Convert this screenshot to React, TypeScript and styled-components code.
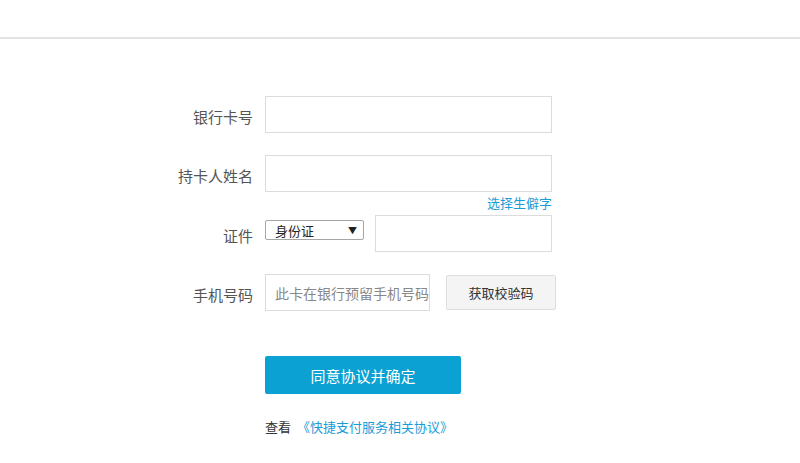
import React from 'react';
import styled, { createGlobalStyle } from 'styled-components';

const GlobalStyle = createGlobalStyle`
  html, body {
    margin: 0;
    padding: 0;
    background: #fff;
    font-family: "Noto Sans CJK SC", "Liberation Sans", sans-serif;
  }
`;

const App = () => {
  return (
    <>
      <GlobalStyle />
      <Page>
        <TopBar />
        <Form>
          <Row>
            <Label>银行卡号</Label>
            <TextInput $width={287} />
          </Row>
          <Row>
            <Label>持卡人姓名</Label>
            <TextInput $width={287} />
          </Row>
          <HintRow>
            <HintLink href='#'>选择生僻字</HintLink>
          </HintRow>
          <Row>
            <Label>证件</Label>
            <IdGroup>
              <Select>
                <span>身份证</span>
                <Arrow>▼</Arrow>
              </Select>
              <TextInput $width={177} />
            </IdGroup>
          </Row>
          <PhoneRow>
            <Label>手机号码</Label>
            <Controls>
              <TextInput $width={165} placeholder='此卡在银行预留手机号码' />
              <CodeButton type='button'>获取校验码</CodeButton>
            </Controls>
          </PhoneRow>
          <SubmitRow>
            <SubmitButton type='button'>同意协议并确定</SubmitButton>
          </SubmitRow>
          <Footer>
            查看
            <AgreementLink href='#'>《快捷支付服务相关协议》</AgreementLink>
          </Footer>
        </Form>
      </Page>
    </>
  );
};

export default App;

const Page = styled.div`
  width: 800px;
  height: 463px;
  overflow: hidden;
`;

const TopBar = styled.div`
  margin-top: 37px;
  height: 2px;
  background: #e3e3e3;
`;

const Form = styled.div`
  display: flex;
  flex-direction: column;
  margin: 57px 0 0 153px;
`;

const Row = styled.div`
  display: flex;
  align-items: flex-start;
  gap: 12px;
  & + & {
    margin-top: 22px;
  }
`;

const Label = styled.label`
  width: 100px;
  height: 37px;
  line-height: 41px;
  text-align: right;
  font-size: 15px;
  color: #555;
  flex-shrink: 0;
`;

const TextInput = styled.input<{ $width: number }>`
  box-sizing: border-box;
  width: ${(p) => p.$width}px;
  height: 37px;
  border: 1px solid #dcdcdc;
  padding: 0 0 0 9px;
  font-size: 14px;
  font-family: "Noto Sans CJK SC", "Liberation Sans", sans-serif;
  color: #333;
  outline: none;

  &::placeholder {
    color: #888;
  }
`;

const HintRow = styled.div`
  display: flex;
  justify-content: flex-end;
  width: 399px;
  height: 23px;
`;

const HintLink = styled.a`
  font-size: 13px;
  line-height: 22px;
  color: #1a9dd7;
  text-decoration: none;
`;

const IdGroup = styled.div`
  display: flex;
  align-items: flex-start;
  gap: 11px;
`;

const Select = styled.div`
  box-sizing: border-box;
  width: 99px;
  height: 20px;
  margin-top: 5px;
  border: 1px solid #a6a6a6;
  border-radius: 2px;
  display: flex;
  align-items: center;
  justify-content: space-between;
  padding: 0 6px 0 9px;
  font-size: 13px;
  color: #222;
`;

const Arrow = styled.span`
  font-size: 9px;
  color: #222;
`;

const PhoneRow = styled(Row)`
  margin-top: 22px;
`;

const Controls = styled.div`
  display: flex;
  align-items: center;
  gap: 16px;
`;

const CodeButton = styled.button`
  box-sizing: border-box;
  width: 110px;
  height: 35px;
  border: 1px solid #dedede;
  border-radius: 2px;
  background: #f4f4f4;
  font-size: 13px;
  font-family: "Noto Sans CJK SC", "Liberation Sans", sans-serif;
  color: #333;
  cursor: pointer;
`;

const SubmitRow = styled.div`
  margin: 45px 0 0 112px;
`;

const SubmitButton = styled.button`
  width: 196px;
  height: 38px;
  border: none;
  border-radius: 2px;
  background: #0ba2d3;
  color: #fff;
  font-size: 15px;
  font-family: "Noto Sans CJK SC", "Liberation Sans", sans-serif;
  cursor: pointer;
`;

const Footer = styled.div`
  margin: 23px 0 0 112px;
  font-size: 13px;
  color: #333;
`;

const AgreementLink = styled.a`
  margin-left: 6px;
  color: #1a9dd7;
  text-decoration: none;
`;
